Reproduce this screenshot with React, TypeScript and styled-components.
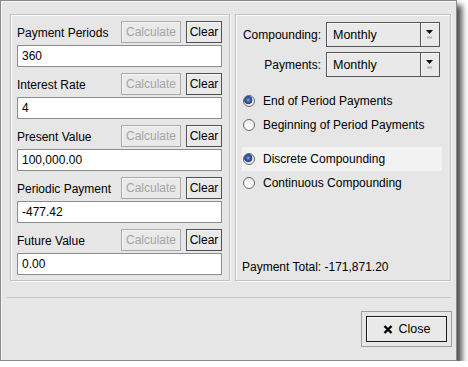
import React from "react";
import styled, { createGlobalStyle } from "styled-components";

const Global = createGlobalStyle`
  html, body { margin: 0; padding: 0; background: #ffffff; }
  body {
    font-family: "Liberation Sans", Arial, sans-serif;
    font-size: 12px;
    color: #000;
  }
  * { box-sizing: border-box; }
`;

const Window = styled.div`
  width: 457px;
  height: 361px;
  border: 1px solid #8a8a8a;
  background: #e6e6e6;
  box-shadow: 5px 5px 6px rgba(0, 0, 0, 0.7), inset 1px 1px 0 #f6f6f6;
  display: flex;
  flex-direction: column;
  padding: 13px 5px 0 9px;
`;

const Panels = styled.div`
  display: flex;
  gap: 5px;
  height: 267px;
`;

const Panel = styled.div<{ $w: number }>`
  width: ${(p) => p.$w}px;
  border: 1px solid #c2c2c2;
  box-shadow: inset 1px 1px 0 #fbfbfb, 1px 1px 0 #f6f6f6;
  display: flex;
  flex-direction: column;
`;

const LeftPanel = styled(Panel)`
  padding: 6px 7px 5px 6px;
  gap: 6px;
`;

const RightPanel = styled(Panel)`
  padding: 7px 8px 6px 6px;
`;

const Field = styled.div`
  display: flex;
  flex-direction: column;
  gap: 2px;
`;

const FieldHeader = styled.div`
  display: flex;
  align-items: center;
  height: 22px;
`;

const Label = styled.span`
  flex: 1;
  padding-top: 1px;
  white-space: nowrap;
`;

const Button = styled.button<{ $w: number; $disabled?: boolean }>`
  width: ${(p) => p.$w}px;
  height: 22px;
  padding: 0;
  margin: 0;
  font-family: "Liberation Sans", Arial, sans-serif;
  font-size: 12px;
  background: #e9e9e9;
  border: 1px solid ${(p) => (p.$disabled ? "#a9a9a9" : "#4f4f4f")};
  color: ${(p) => (p.$disabled ? "#a4a4a4" : "#000")};
  box-shadow: inset 1px 1px 0 #f7f7f7;
  & + & { margin-left: 5px; }
`;

const TextInput = styled.input`
  height: 22px;
  width: 100%;
  margin: 0;
  border: 1px solid #8c8c8c;
  background: #fff;
  padding: 0 4px;
  font-family: "Liberation Sans", Arial, sans-serif;
  font-size: 12px;
  color: #000;
  outline: none;
`;

const ComboGrid = styled.div`
  display: grid;
  grid-template-columns: 79px 114px;
  column-gap: 5px;
  row-gap: 5px;
  align-items: center;
`;

const ComboLabel = styled.span`
  text-align: right;
  white-space: nowrap;
`;

const Combo = styled.div`
  height: 25px;
  border: 1px solid #555;
  background: #e9e9e9;
  box-shadow: inset 1px 1px 0 #f7f7f7;
  display: flex;
`;

const ComboText = styled.span`
  flex: 1;
  display: flex;
  align-items: center;
  padding-left: 6px;
  font-size: 12.5px;
`;

const ComboArrow = styled.span`
  width: 19px;
  border-left: 1px solid #555;
  box-shadow: inset 1px 0 0 #f7f7f7;
  display: flex;
  align-items: center;
  justify-content: center;
`;

const RadioGroup = styled.div<{ $top: number }>`
  display: flex;
  flex-direction: column;
  margin-top: ${(p) => p.$top}px;
`;

const RadioRow = styled.div<{ $hl?: boolean }>`
  display: flex;
  align-items: center;
  gap: 8px;
  height: 24px;
  padding-left: 1px;
  width: 200px;
  background: ${(p) => (p.$hl ? "#f2f2f2" : "transparent")};
  white-space: nowrap;
`;

const RadioDot = styled.span<{ $on?: boolean }>`
  width: 12px;
  height: 12px;
  border-radius: 50%;
  border: 1px solid #666;
  background: ${(p) =>
    p.$on
      ? "radial-gradient(circle at 42% 40%, #9db4e6 0px, #4467b8 1.6px, #24468f 3.6px, #5a6f99 4.1px, #d8d8d8 4.4px, #eeeeee 5px)"
      : "linear-gradient(#ececec, #ffffff)"};
  flex: none;
`;

const Total = styled.div`
  margin-top: auto;
  line-height: 14px;
  white-space: nowrap;
`;

const Separator = styled.div`
  height: 1px;
  margin: 16px 0 0 -3px;
  background: #c6c6c6;
`;

const Footer = styled.div`
  display: flex;
  justify-content: flex-end;
  margin: 13px -1px 0 0;
`;

const CloseFrame = styled.div`
  border: 1px solid #9e9e9e;
  padding: 4px;
`;

const CloseButton = styled.button`
  width: 81px;
  height: 26px;
  margin: 0;
  padding: 0;
  border: 1px solid #1c1c1c;
  background: #e9e9e9;
  box-shadow: inset 1px 1px 0 #f8f8f8;
  display: flex;
  align-items: center;
  justify-content: center;
  gap: 6px;
  font-family: "Liberation Sans", Arial, sans-serif;
  font-size: 12.5px;
  color: #000;
`;

const fields = [
  { label: "Payment Periods", value: "360" },
  { label: "Interest Rate", value: "4" },
  { label: "Present Value", value: "100,000.00" },
  { label: "Periodic Payment", value: "-477.42" },
  { label: "Future Value", value: "0.00" },
];

const Arrow = () => (
  <svg width="8" height="10" viewBox="0 0 8 10">
    <polygon points="0,0 7,0 3.5,4" fill="#111" />
    <rect x="1" y="6.5" width="5" height="2" fill="#b4b4b4" />
  </svg>
);

const XIcon = () => (
  <svg width="10" height="9" viewBox="0 0 10 9">
    <path d="M1.5 1 L8.5 8 M8.5 1 L1.5 8" stroke="#000" strokeWidth="2.4" />
  </svg>
);

export default function App() {
  return (
    <>
      <Global />
      <Window>
        <Panels>
          <LeftPanel $w={220}>
            {fields.map((f) => (
              <Field key={f.label}>
                <FieldHeader>
                  <Label>{f.label}</Label>
                  <Button $w={60} $disabled>
                    Calculate
                  </Button>
                  <Button $w={36}>Clear</Button>
                </FieldHeader>
                <TextInput readOnly value={f.value} />
              </Field>
            ))}
          </LeftPanel>
          <RightPanel $w={216}>
            <ComboGrid>
              <ComboLabel>Compounding:</ComboLabel>
              <Combo>
                <ComboText>Monthly</ComboText>
                <ComboArrow>
                  <Arrow />
                </ComboArrow>
              </Combo>
              <ComboLabel>Payments:</ComboLabel>
              <Combo>
                <ComboText>Monthly</ComboText>
                <ComboArrow>
                  <Arrow />
                </ComboArrow>
              </Combo>
            </ComboGrid>
            <RadioGroup $top={12}>
              <RadioRow>
                <RadioDot $on />
                End of Period Payments
              </RadioRow>
              <RadioRow>
                <RadioDot />
                Beginning of Period Payments
              </RadioRow>
            </RadioGroup>
            <RadioGroup $top={10}>
              <RadioRow $hl>
                <RadioDot $on />
                Discrete Compounding
              </RadioRow>
              <RadioRow>
                <RadioDot />
                Continuous Compounding
              </RadioRow>
            </RadioGroup>
            <Total>Payment Total: -171,871.20</Total>
          </RightPanel>
        </Panels>
        <Separator />
        <Footer>
          <CloseFrame>
            <CloseButton>
              <XIcon />
              Close
            </CloseButton>
          </CloseFrame>
        </Footer>
      </Window>
    </>
  );
}
